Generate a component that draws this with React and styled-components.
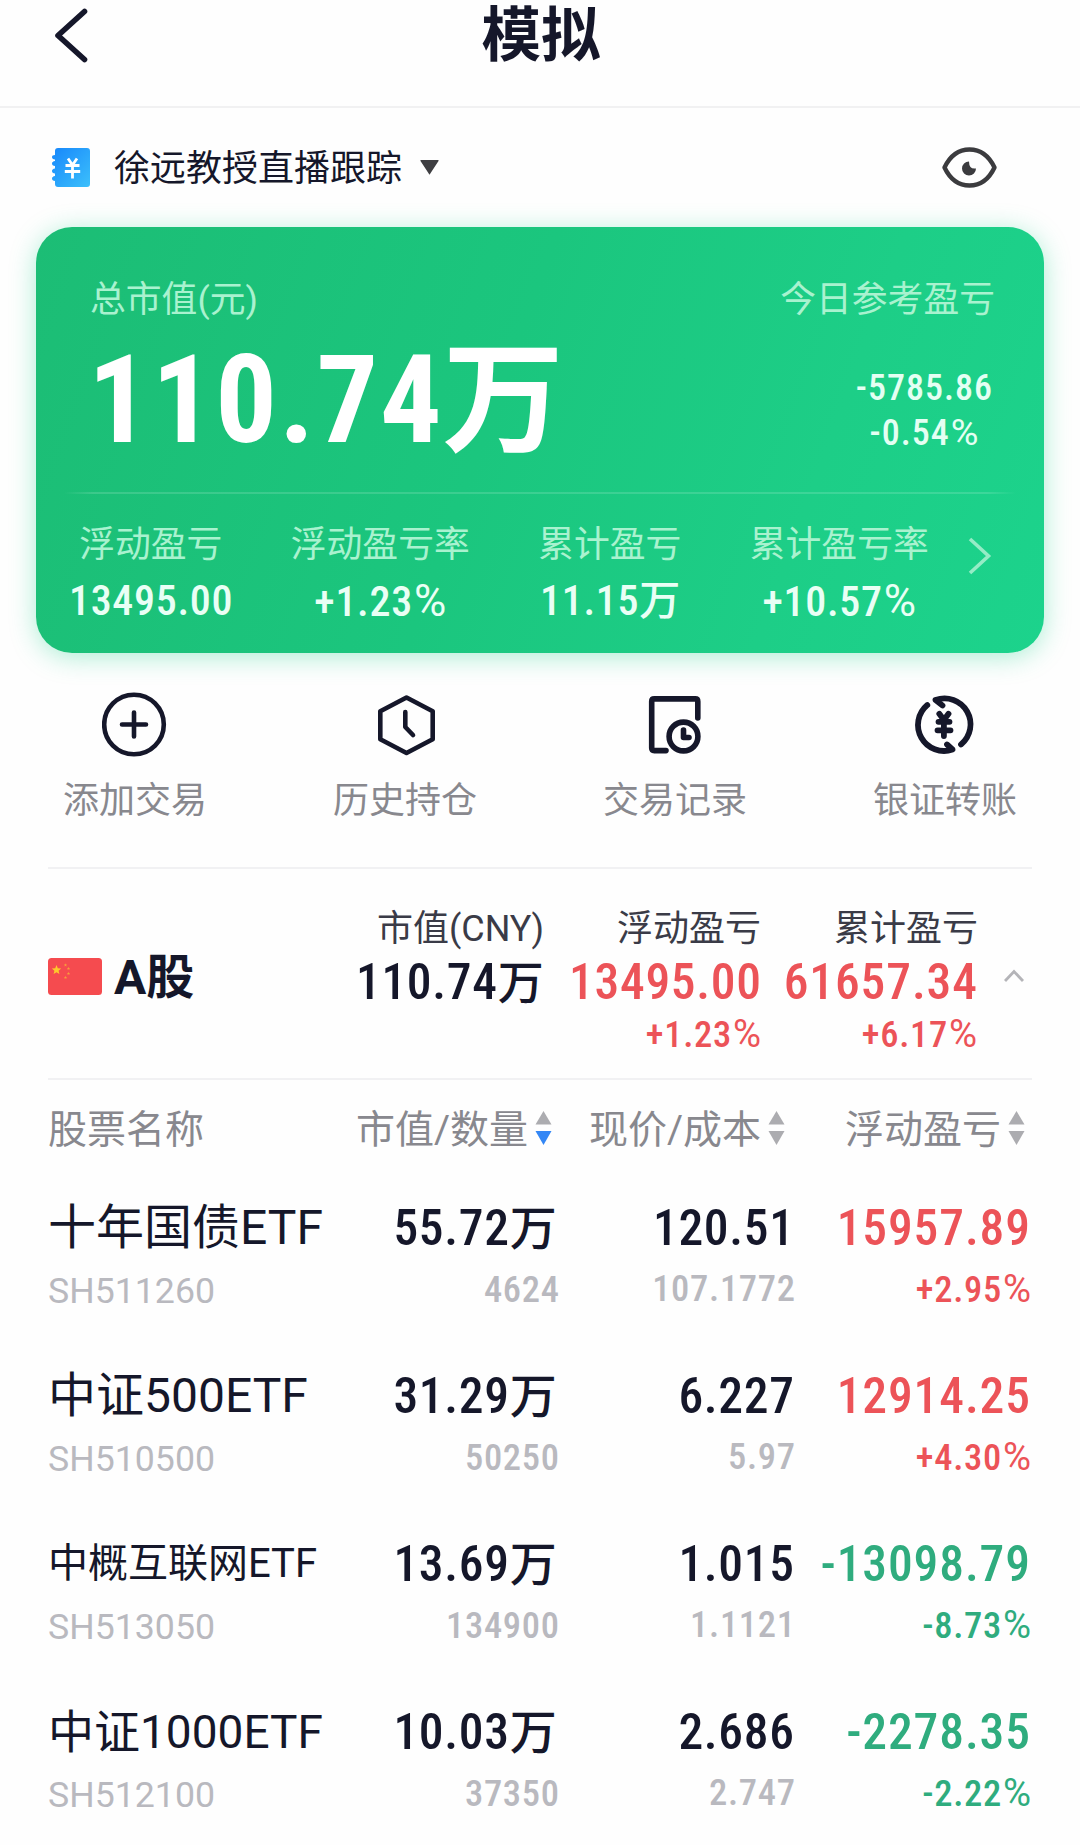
import React from 'react';
import styled, { createGlobalStyle } from 'styled-components';

const INK = '#15172a';
const RED = '#ec5358';
const GREEN = '#2fac7e';
const MUTED = '#b9b9bf';
const LABEL = '#88888e';

const GlobalStyle = createGlobalStyle`
  * { box-sizing: border-box; }
  body {
    margin: 0;
    background: #fefefe;
    color: ${INK};
    font-family: Roboto, "Noto Sans CJK SC", sans-serif;
  }
  svg { display: block; flex: none; }
`;

const Page = styled.div`
  width: 1080px;
  height: 1845px;
  overflow: hidden;
  display: flex;
  flex-direction: column;
`;

/* Narrow numerals; the negative margin drops the tracking after the last digit */
const Numerals = styled.span`
  display: block;
  white-space: nowrap;
  font-family: "Roboto Condensed", "Noto Sans CJK SC", sans-serif;
  font-weight: ${(p) => p.$weight || 500};
  font-size: ${(p) => p.$size}px;
  line-height: ${(p) => p.$line || 50}px;
  letter-spacing: ${(p) => p.$track || 0}px;
  margin-right: ${(p) => (p.$end || 0) - (p.$track || 0)}px;
  color: ${(p) => p.$color || 'inherit'};
`;

const Unit = styled.span`
  font-size: ${(p) => p.$size}px;
  letter-spacing: 0;
  margin-left: ${(p) => p.$pull || 0}px;
`;

const Percent = styled.span`
  margin-left: 1px;
  font-family: Roboto, sans-serif;
  font-size: 1.05em;
  font-weight: 400;
`;

const Figure = ({ children, ...rest }) => {
  const isPercent = typeof children === 'string' && children.endsWith('%');
  return (
    <Numerals {...rest}>
      {isPercent ? children.slice(0, -1) : children}
      {isPercent && <Percent>%</Percent>}
    </Numerals>
  );
};

const Header = styled.header`
  flex: none;
  height: 108px;
  padding: 0 52px 34px 54px;
  border-bottom: 2px solid #f1f1f2;
  display: grid;
  grid-template-columns: 1fr auto 1fr;
  align-items: center;
`;

const Title = styled.h1`
  margin: 0;
  font-size: 59.5px;
  line-height: 70px;
  font-weight: 700;
`;

const Account = styled.div`
  flex: none;
  height: 119px;
  padding: 0 83px 0 52px;
  display: flex;
  align-items: center;
`;

const AccountName = styled.span`
  margin: 3px 18px 0 24px;
  font-size: 36px;
  line-height: 50px;
`;

const Spacer = styled.div`
  flex: 1;
`;

const Card = styled.section`
  flex: none;
  height: 426px;
  margin: 0 36px;
  padding-top: 48px;
  border-radius: 36px;
  color: #fff;
  background: linear-gradient(110deg, #1cbd75 0%, #1bc67e 45%, #1dce87 75%, #1cd38c 100%);
  box-shadow: 0 4px 26px rgba(29, 208, 138, 0.36);
`;

const Summary = styled.div`
  height: 217px;
  padding: 0 49px 0 54px;
  display: flex;
  justify-content: space-between;
`;

const CardLabel = styled.div`
  font-size: 35.8px;
  line-height: 50px;
  color: #a9f2cf;
`;

const Total = styled.div`
  margin: 16px 0 0 -2px;
`;

const Today = styled.div`
  display: flex;
  flex-direction: column;
  align-items: flex-end;
`;

const TodayFigures = styled.div`
  margin: 41px 3px 0 0;
  display: flex;
  flex-direction: column;
  align-items: center;
  color: #e4fff3;
`;

const CardRule = styled.div`
  height: 2px;
  margin: 0 28px;
  background: linear-gradient(
    90deg,
    rgba(255, 255, 255, 0) 0%,
    rgba(255, 255, 255, 0.14) 3%,
    rgba(255, 255, 255, 0.14) 97%,
    rgba(255, 255, 255, 0) 100%
  );
`;

const Stats = styled.div`
  display: flex;
  padding-top: 26px;
`;

const Stat = styled.div`
  width: 229.5px;
  display: flex;
  flex-direction: column;
  align-items: center;
  gap: 6px;
  color: #e9fff5;
`;

const More = styled.div`
  padding: 17px 0 0 14px;
`;

const Actions = styled.nav`
  flex: none;
  height: 214px;
  padding-top: 38px;
  display: grid;
  grid-template-columns: repeat(4, 1fr);
`;

const Action = styled.div`
  display: flex;
  flex-direction: column;
  align-items: center;
  gap: 18px;
  font-size: 36px;
  line-height: 50px;
  color: ${LABEL};
`;

const Rule = styled.div`
  flex: none;
  height: 2px;
  margin: 0 48px;
  background: #f1f1f3;
`;

const Market = styled.section`
  flex: none;
  height: 209px;
  padding: 35px 48px 0;
  display: flex;
`;

const MarketName = styled.div`
  flex: 1;
  height: 144px;
  display: flex;
  align-items: center;
  gap: 12px;
  font-size: 48px;
  font-weight: 700;
  line-height: 60px;

  span { padding-top: 4px; }
`;

const MarketColumn = styled.div`
  width: 217px;
  display: flex;
  flex-direction: column;
  align-items: flex-end;
`;

const MarketLabel = styled.div`
  margin: 0 -1px 2px 0;
  font-size: 36px;
  line-height: 50px;
  color: #3a3b47;
`;

const Collapse = styled.div`
  width: 55px;
  padding: 65px 0 0 27px;
`;

const Columns = styled.div`
  flex: none;
  padding: 0 49px 0 48px;
  display: grid;
  grid-template-columns: 275px repeat(3, 236px);
`;

const TableHead = styled(Columns)`
  height: 96px;
  align-items: center;
  font-size: 39px;
  line-height: 50px;
  color: ${LABEL};

  span { padding-top: 3px; }
`;

const SortCell = styled.div`
  display: flex;
  align-items: center;
  justify-content: flex-end;
  gap: 7px;
  padding-right: ${(p) => p.$inset}px;
  white-space: nowrap;
`;

const Row = styled(Columns)`
  height: 168px;
  padding-top: 22px;
`;

const Cell = styled.div`
  display: flex;
  flex-direction: column;
  align-items: flex-end;
  gap: 11px;
`;

const NameCell = styled.div`
  white-space: nowrap;
`;

const StockName = styled.div`
  font-size: ${(p) => p.$size}px;
  line-height: 60px;
`;

const StockCode = styled.div`
  margin-top: 13px;
  font-size: 35.7px;
  line-height: 40px;
  color: ${MUTED};
`;

const stroke = { fill: 'none', stroke: INK, strokeLinecap: 'round', strokeLinejoin: 'round' };

const BackIcon = () => (
  <svg width="36" height="56" viewBox="0 0 36 56" {...stroke} strokeWidth="5.6">
    <path d="M30.500 3.500 4 27.500 30.500 51.500" />
  </svg>
);

const WalletIcon = () => (
  <svg width="38" height="39" viewBox="0 0 38 39">
    <defs>
      <linearGradient id="wallet" x1="0" y1="0" x2="1" y2="1">
        <stop offset="0" stopColor="#1787fb" />
        <stop offset="1" stopColor="#3cc0fb" />
      </linearGradient>
    </defs>
    <path
      fill="url(#wallet)"
      d="M6 0H35Q38 0 38 3V36Q38 39 35 39H6Q3 39 3 36V33Q0 32.500 0 30.500T3 28V25.500Q0 25 0 23T3 20.500V18Q0 17.500 0 15.500T3 13V11.500Q0 11 0 9T3 7V3Q3 0 6 0Z"
    />
    <path d="M16 10.500 20.500 17 25 10.500M20.500 17V30.500M13.500 17.500H27.500M12.800 23.500H28.200" fill="none" stroke="#fff" strokeWidth="2.800" />
  </svg>
);

const Caret = () => (
  <svg width="19" height="15" viewBox="0 0 19 15">
    <path d="M1 0H18Q19 0 18.500 1L10 14Q9.500 15 9 14L.5 1Q0 0 1 0Z" fill="#3f3f42" />
  </svg>
);

const EyeIcon = () => (
  <svg width="55" height="41" viewBox="0 0 55 41">
    <path
      d="M2.500 20.500C8 9 16.500 2.500 27.500 2.500S47 9 52.500 20.500C47 32 38.500 38.500 27.500 38.500S8 32 2.500 20.500Z"
      fill="none" stroke="#3b3b3e" strokeWidth="4.400" strokeLinejoin="round"
    />
    <path d="M27 14.500A7 7 0 1 0 34 21.500Q27 22.500 27 14.500Z" fill="#3b3b3e" />
  </svg>
);

const ChevronRight = () => (
  <svg width="24" height="38" viewBox="0 0 24 38">
    <path d="M2 2 20.500 19 2 36" fill="none" stroke="#95ecc6" strokeWidth="3.600" />
  </svg>
);

const ChevronUp = () => (
  <svg width="20" height="13" viewBox="0 0 20 13">
    <path d="M1 12 10 2.500 19 12" fill="none" stroke="#b4b4b8" strokeWidth="2.800" />
  </svg>
);

const AddIcon = () => (
  <svg width="66" height="67" viewBox="0 0 66 67" {...stroke} strokeWidth="4.600">
    <circle cx="32" cy="33.500" r="29.800" />
    <path d="M32 21.500V45.500M20 33.500H44" />
  </svg>
);

const HistoryIcon = () => (
  <svg width="66" height="67" viewBox="0 0 66 67" {...stroke} strokeWidth="4.600">
    <path d="M34.500 6.500 60.700 20.200V48.200L34.500 62 8.300 48.200V20.200Z" />
    <path d="M33.300 21V36L41 44" />
  </svg>
);

const RecordIcon = () => (
  <svg width="66" height="67" viewBox="0 0 66 67" {...stroke} strokeWidth="5.600">
    <path d="M55.800 27V10.500Q55.800 7.900 53.200 7.900H12.300Q9.700 7.900 9.700 10.500V57Q9.700 59.600 12.300 59.600H24" />
    <circle cx="41.500" cy="45.500" r="14.400" />
    <path d="M41.500 39V46.500H47" />
  </svg>
);

const TransferIcon = () => (
  <svg width="66" height="67" viewBox="0 0 66 67" {...stroke} strokeWidth="5.800">
    <path d="M15.300 14A26 26 0 0 0 40.500 58.500L35 53.500" />
    <path d="M49 53.500A26 26 0 0 0 23.500 9L30.500 14.500" />
    <path d="M27.300 22.800 31.900 29 36.500 22.800M31.900 29V45M26.500 30.800H37.500M25.500 39.300H38.500" />
  </svg>
);

const star = (cx, cy, r) =>
  Array.from({ length: 10 }, (_, i) => {
    const a = (Math.PI / 5) * i - Math.PI / 2;
    const d = i % 2 ? r * 0.45 : r;
    return `${cx + d * Math.cos(a)},${cy + d * Math.sin(a)}`;
  }).join(' ');

const FlagIcon = () => (
  <svg width="54" height="37" viewBox="0 0 54 37">
    <rect width="54" height="37" rx="3.500" fill="#f54b4f" />
    <polygon points={star(8.500, 12, 4.900)} fill="#fdc92c" />
    {[[17.500, 7], [20.500, 10.500], [20.500, 15.500], [17.500, 19.500]].map(([x, y]) => (
      <polygon key={y} points={star(x, y, 1.700)} fill="#f8a03a" />
    ))}
  </svg>
);

const SortIcon = ({ active }) => (
  <svg width="17" height="34" viewBox="0 0 17 34">
    <path d="M8.500 0 16.500 13.500H.5Z" fill="#acacb0" />
    <path d="M8.500 34 16.500 20H.5Z" fill={active ? '#3487f5' : '#acacb0'} />
  </svg>
);

const stats = [
  { label: '浮动盈亏', value: '13495.00' },
  { label: '浮动盈亏率', value: '+1.23%' },
  { label: '累计盈亏', value: '11.15', unit: '万' },
  { label: '累计盈亏率', value: '+10.57%' },
];

const actions = [
  { label: '添加交易', Icon: AddIcon },
  { label: '历史持仓', Icon: HistoryIcon },
  { label: '交易记录', Icon: RecordIcon },
  { label: '银证转账', Icon: TransferIcon },
];

const stocks = [
  { name: '十年国债ETF', size: 48, code: 'SH511260', value: '55.72', qty: '4624', price: '120.51', cost: '107.1772', gain: '15957.89', pct: '+2.95%' },
  { name: '中证500ETF', size: 48, code: 'SH510500', value: '31.29', qty: '50250', price: '6.227', cost: '5.97', gain: '12914.25', pct: '+4.30%' },
  { name: '中概互联网ETF', size: 40, code: 'SH513050', value: '13.69', qty: '134900', price: '1.015', cost: '1.1121', gain: '-13098.79', pct: '-8.73%' },
  { name: '中证1000ETF', size: 46, code: 'SH512100', value: '10.03', qty: '37350', price: '2.686', cost: '2.747', gain: '-2278.35', pct: '-2.22%' },
];

const Large = (props) => <Figure $size={49.5} $track={0.9} {...props} />;
const Small = (props) => <Figure $size={36.5} $track={0.7} {...props} />;

export default function App() {
  return (
    <Page>
      <GlobalStyle />
      <Header>
        <BackIcon />
        <Title>模拟</Title>
      </Header>
      <Account>
        <WalletIcon />
        <AccountName>徐远教授直播跟踪</AccountName>
        <Caret />
        <Spacer />
        <EyeIcon />
      </Account>
      <Card>
        <Summary>
          <div>
            <CardLabel>总市值(元)</CardLabel>
            <Total>
              <Figure $size={122} $line={120} $track={2} $weight={700}>
                110.74<Unit $size={121} $pull={-1}>万</Unit>
              </Figure>
            </Total>
          </div>
          <Today>
            <CardLabel>今日参考盈亏</CardLabel>
            <TodayFigures>
              <Figure $size={36} $line={44} $track={1}>-5785.86</Figure>
              <Figure $size={36} $line={44} $track={1}>-0.54%</Figure>
            </TodayFigures>
          </Today>
        </Summary>
        <CardRule />
        <Stats>
          {stats.map((s) => (
            <Stat key={s.label}>
              <CardLabel>{s.label}</CardLabel>
              <Figure $size={42} $track={0.7}>
                {s.unit ? <>{s.value}<Unit $size={41}>{s.unit}</Unit></> : s.value}
              </Figure>
            </Stat>
          ))}
          <More><ChevronRight /></More>
        </Stats>
      </Card>
      <Actions>
        {actions.map(({ label, Icon }) => (
          <Action key={label}>
            <Icon />
            <span>{label}</span>
          </Action>
        ))}
      </Actions>
      <Rule />
      <Market>
        <MarketName>
          <FlagIcon />
          <span>A股</span>
        </MarketName>
        <MarketColumn>
          <MarketLabel>市值(CNY)</MarketLabel>
          <Large $line={52} $track={0.7}>110.74<Unit $size={46}>万</Unit></Large>
        </MarketColumn>
        <MarketColumn>
          <MarketLabel>浮动盈亏</MarketLabel>
          <Large $line={52} $end={-1} $track={0.7} $color={RED}>13495.00</Large>
          <Small $line={52} $end={-1} $color={RED}>+1.23%</Small>
        </MarketColumn>
        <MarketColumn>
          <MarketLabel>累计盈亏</MarketLabel>
          <Large $line={52} $color={RED}>61657.34</Large>
          <Small $line={52} $color={RED}>+6.17%</Small>
        </MarketColumn>
        <Collapse><ChevronUp /></Collapse>
      </Market>
      <Rule />
      <TableHead>
        <span>股票名称</span>
        <SortCell $inset={7}><span>市值/数量</span><SortIcon active /></SortCell>
        <SortCell $inset={10}><span>现价/成本</span><SortIcon /></SortCell>
        <SortCell $inset={6}><span>浮动盈亏</span><SortIcon /></SortCell>
      </TableHead>
      {stocks.map((s) => {
        const tone = s.gain.startsWith('-') ? GREEN : RED;
        return (
          <Row key={s.code}>
            <NameCell>
              <StockName $size={s.size}>{s.name}</StockName>
              <StockCode>{s.code}</StockCode>
            </NameCell>
            <Cell>
              <Large $line={60} $end={3} $track={0.7}>{s.value}<Unit $size={47}>万</Unit></Large>
              <Small $line={40} $color={MUTED}>{s.qty}</Small>
            </Cell>
            <Cell>
              <Large $line={60} $end={1} $track={0.7}>{s.price}</Large>
              <Small $line={40} $color={MUTED}>{s.cost}</Small>
            </Cell>
            <Cell>
              <Large $line={60} $end={1} $color={tone}>{s.gain}</Large>
              <Small $line={40} $color={tone}>{s.pct}</Small>
            </Cell>
          </Row>
        );
      })}
    </Page>
  );
}
